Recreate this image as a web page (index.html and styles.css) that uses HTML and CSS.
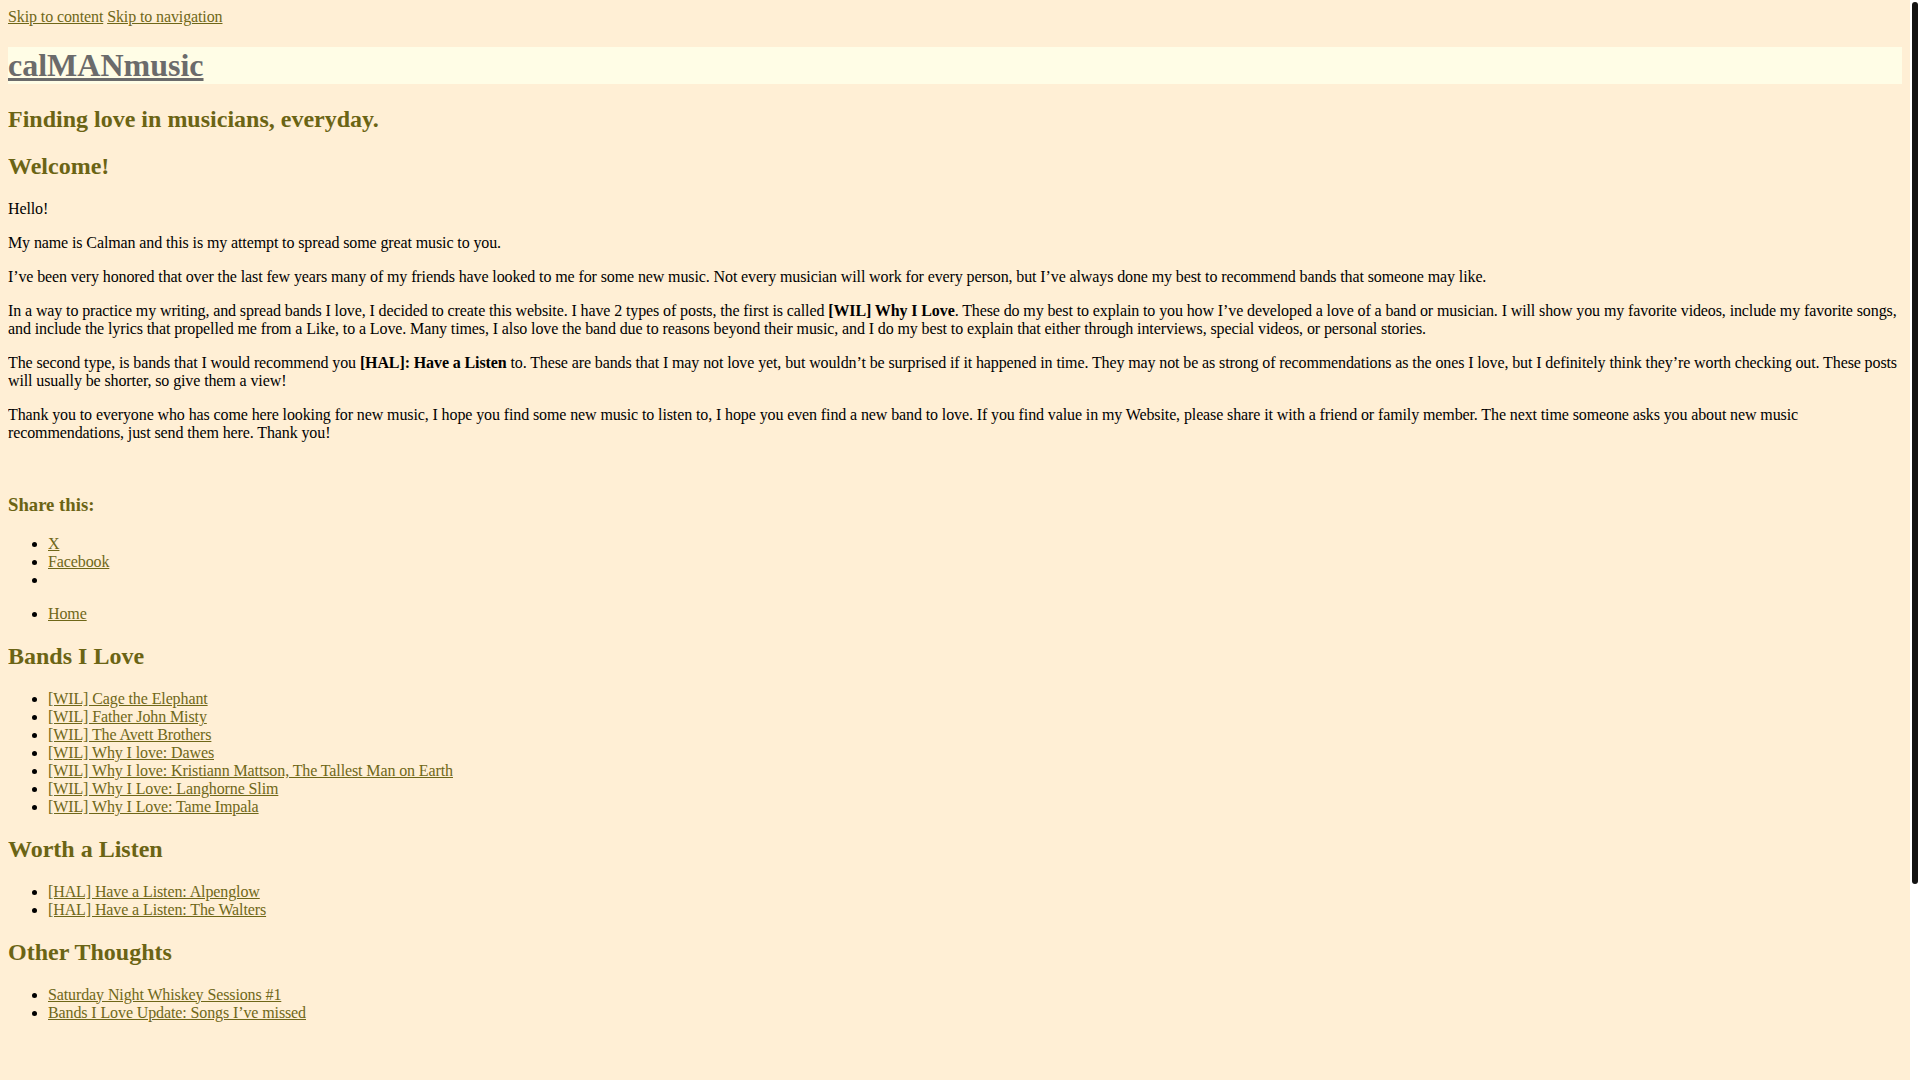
FILE: index.html
```html
<!DOCTYPE html>
<html lang="en">
<head>
<meta charset="utf-8">
<title>calMANmusic</title>
<link rel="stylesheet" href="styles.css">
</head>
<body>
<div class="skip-links"><a href="#content">Skip to content</a> <a href="#nav">Skip to navigation</a></div>
<header class="site-header">
  <h1 class="site-title"><a href="#">calMANmusic</a></h1>
  <h2 class="site-tagline">Finding love in musicians, everyday.</h2>
</header>
<main id="content" class="content">
  <article class="entry">
    <h2 class="entry-title">Welcome!</h2>
    <p>Hello!</p>
    <p>My name is Calman and this is my attempt to spread some great music to you.</p>
    <p>I’ve been very honored that over the last few years many of my friends have looked to me for some new music. Not every musician will work for every person, but I’ve always done my best to recommend bands that someone may like.</p>
    <p>In a way to practice my writing, and spread bands I love, I decided to create this website. I have 2 types of posts, the first is called <strong>[WIL] Why I Love</strong>. These do my best to explain to you how I’ve developed a love of a band or musician. I will show you my favorite videos, include my favorite songs, and include the lyrics that propelled me from a Like, to a Love. Many times, I also love the band due to reasons beyond their music, and I do my best to explain that either through interviews, special videos, or personal stories.</p>
    <p>The second type, is bands that I would recommend you <strong>[HAL]: Have a Listen</strong> to. These are bands that I may not love yet, but wouldn’t be surprised if it happened in time. They may not be as strong of recommendations as the ones I love, but I definitely think they’re worth checking out. These posts will usually be shorter, so give them a view!</p>
    <p>Thank you to everyone who has come here looking for new music, I hope you find some new music to listen to, I hope you even find a new band to love. If you find value in my Website, please share it with a friend or family member. The next time someone asks you about new music recommendations, just send them here. Thank you!</p>
    <p>&nbsp;</p>
    <div class="share">
      <h3 class="share-title">Share this:</h3>
      <ul>
        <li><a href="#">X</a></li>
        <li><a href="#">Facebook</a></li>
        <li></li>
      </ul>
    </div>
  </article>
</main>
<nav id="nav" class="site-nav">
  <ul>
    <li><a href="#">Home</a></li>
  </ul>
</nav>
<aside class="sidebar">
  <h2>Bands I Love</h2>
  <ul>
    <li><a href="#">[WIL] Cage the Elephant</a></li>
    <li><a href="#">[WIL] Father John Misty</a></li>
    <li><a href="#">[WIL] The Avett Brothers</a></li>
    <li><a href="#">[WIL] Why I love: Dawes</a></li>
    <li><a href="#">[WIL] Why I love: Kristiann Mattson, The Tallest Man on Earth</a></li>
    <li><a href="#">[WIL] Why I Love: Langhorne Slim</a></li>
    <li><a href="#">[WIL] Why I Love: Tame Impala</a></li>
  </ul>
  <h2>Worth a Listen</h2>
  <ul>
    <li><a href="#">[HAL] Have a Listen: Alpenglow</a></li>
    <li><a href="#">[HAL] Have a Listen: The Walters</a></li>
  </ul>
  <h2>Other Thoughts</h2>
  <ul>
    <li><a href="#">Saturday Night Whiskey Sessions #1</a></li>
    <li><a href="#">Bands I Love Update: Songs I’ve missed</a></li>
  </ul>
</aside>
<footer class="site-footer"></footer>
<div class="scrollbar" aria-hidden="true"><div class="scrollbar-thumb"></div></div>
</body>
</html>
```

FILE: styles.css
```css
html {
  background: #ffefd5;
}
body {
  margin: 8px 18px 8px 8px;
  background: #ffefd5;
  color: #000;
  font-family: "Liberation Serif", "Times New Roman", serif;
  font-size: 16px;
  letter-spacing: -0.11px;
}
a {
  color: #6f6718;
}
h1, h2, h3 {
  color: #6b6414;
  letter-spacing: 0;
}
.site-title {
  background: #fffde6;
}
.site-title a {
  color: #6b6b6b;
}
.site-footer {
  height: 290px;
}
.scrollbar {
  position: fixed;
  top: 0;
  right: 0;
  width: 10px;
  height: 100vh;
  background: #ffffff;
}
.scrollbar-thumb {
  margin: 2px 2px 0 2px;
  height: 882px;
  background: #121212;
  border-radius: 3px;
}
```
